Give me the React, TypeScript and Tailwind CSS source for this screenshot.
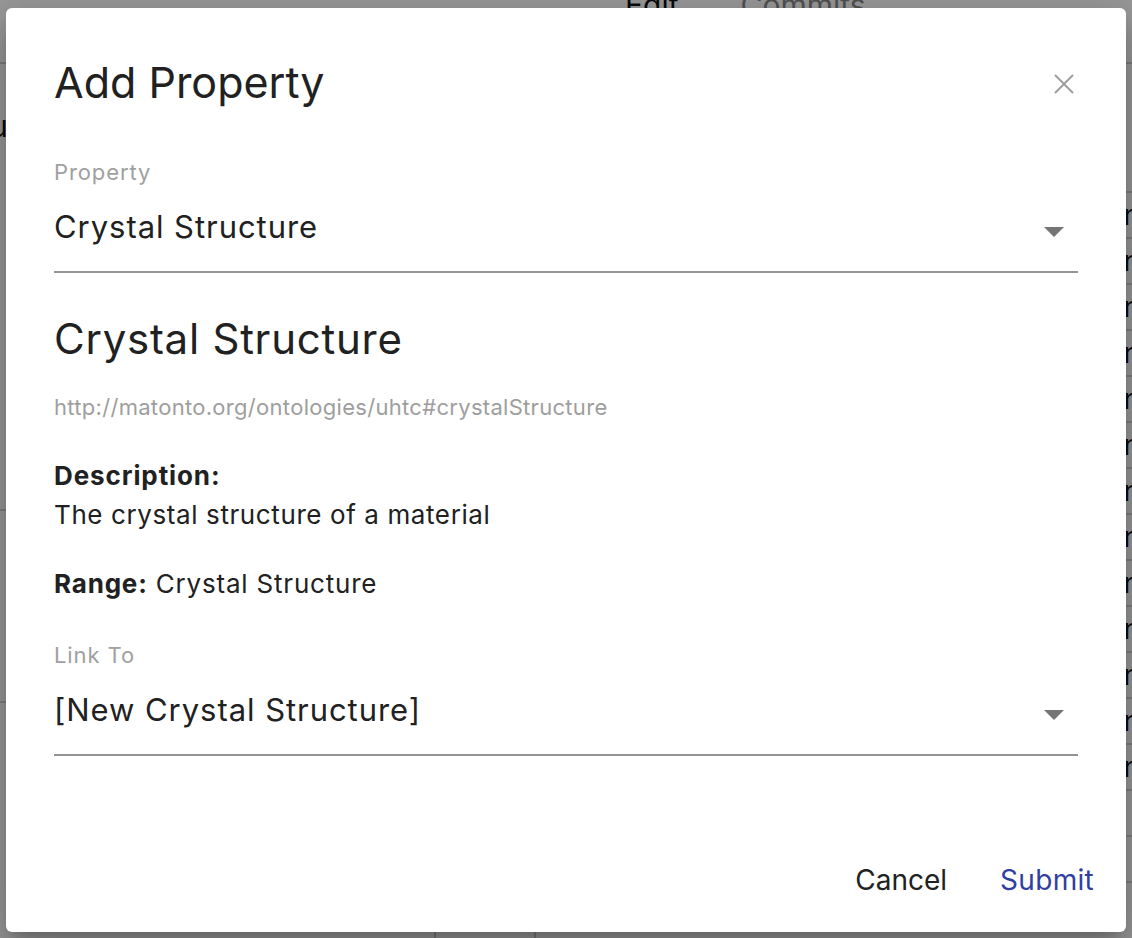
import React from 'react';

const font = { fontFamily: 'Inter, "Noto Sans", sans-serif' };

const rowTops = [193, 238, 285, 332, 377, 423, 470, 515, 562, 607, 653, 698, 745, 792, 837, 883];

const BackgroundPage = () => (
    <div className="absolute inset-0 bg-white overflow-hidden" style={font}>
        <div className="flex h-[64px] border-b-2 border-[#d0d0d0]">
            <div className="flex gap-[62px] pl-[625px] -mt-[17px] text-[30px]">
                <span className="text-[#111]">Edit</span>
                <span className="text-[#888]">Commits</span>
            </div>
        </div>
        <div className="flex">
            <div className="w-[436px] h-[874px] border-r-2 border-[#cfcfcf]">
                <div className="-ml-[10px] mt-[40px] text-[30px] text-[#111]">u</div>
                <div className="mt-[360px] border-t-2 border-[#d6d6d6]" />
                <div className="mt-[190px] border-t-2 border-[#d6d6d6]" />
            </div>
            <div className="w-[100px] border-r-2 border-[#cfcfcf]" />
            <div className="flex-1 pt-[127px]">
                {rowTops.map((t, i) => (
                    <div key={t} className="h-[46px] border-t-2 border-[#d6d6d6] flex items-center justify-end">
                        {i < 13 && <span className="text-[28px] text-[#111] -mr-[8px]">n</span>}
                    </div>
                ))}
            </div>
        </div>
    </div>
);

const Caret = () => (
    <svg width="20" height="10" viewBox="0 0 20 10" className="shrink-0">
        <path d="M0 0 L20 0 L10 10 Z" fill="#757575" />
    </svg>
);

const SelectField = ({ label, value }: { label: string, value: string }) => (
    <div>
        <div className="text-[22px] leading-[24px] text-[#a0a0a0] tracking-[0.9px]">{label}</div>
        <div className="mt-[25px] flex items-center justify-between pb-[26px] border-b-2 border-[#949494]">
            <span className="text-[31px] leading-[36px] text-[#212121] tracking-[0.95px]">{value}</span>
            <div className="mr-[14px] mt-[10px]"><Caret /></div>
        </div>
    </div>
);

const AddPropertyDialog = () => (
    <div className="relative w-[1120px] h-[924px] bg-white rounded-[6px] shadow-[0_11px_15px_-7px_rgba(0,0,0,0.2),0_24px_38px_3px_rgba(0,0,0,0.14),0_9px_46px_8px_rgba(0,0,0,0.12)] flex flex-col" style={font}>
        <button className="absolute right-[52px] top-[66px] w-[20px] h-[20px]" aria-label="Close">
            <svg width="20" height="20" viewBox="0 0 20 20">
                <path d="M1 1 L19 19 M19 1 L1 19" stroke="#9e9e9e" strokeWidth="2" />
            </svg>
        </button>
        <div className="px-[48px]">
            <h2 className="mt-[46px] text-[43px] leading-[56px] text-[#212121] font-normal">Add Property</h2>
            <div className="mt-[50px]">
                <SelectField label="Property" value="Crystal Structure" />
            </div>
            <h3 className="mt-[42px] text-[42px] leading-[48px] text-[#212121] tracking-[0.75px]">Crystal Structure</h3>
            <div className="mt-[30px] text-[22px] leading-[28px] text-[#9e9e9e] tracking-[0.3px]">http://matonto.org/ontologies/uhtc#crystalStructure</div>
            <div className="mt-[35px] text-[26px] leading-[39px] text-[#212121] tracking-[0.6px]">
                <div className="font-bold tracking-[0.9px]">Description:</div>
                <div>The crystal structure of a material</div>
            </div>
            <div className="mt-[30px] text-[26px] leading-[39px] text-[#212121] tracking-[0.8px]">
                <span className="font-bold">Range:</span> Crystal Structure
            </div>
            <div className="mt-[40px]">
                <SelectField label="Link To" value="[New Crystal Structure]" />
            </div>
        </div>
        <div className="mt-auto flex justify-end items-center gap-[53px] pr-[32px] pb-[32px]">
            <button className="text-[28px] leading-[40px] text-[#212121]">Cancel</button>
            <button className="text-[28px] leading-[40px] text-[#303f9f] tracking-[0.3px]">Submit</button>
        </div>
    </div>
);

export default function App() {
    return (
        <div className="relative w-[1132px] h-[938px] overflow-hidden">
            <BackgroundPage />
            <div className="absolute inset-0 bg-black/40 pt-[8px] pl-[6px]">
                <AddPropertyDialog />
            </div>
        </div>
    );
}
